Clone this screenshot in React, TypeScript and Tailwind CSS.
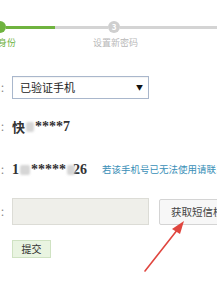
import React from "react";

const cjk = "font-['Microsoft_YaHei','Noto_Sans_CJK_SC',sans-serif]";

function Label({ text }: { text: string }) {
  return (
    <div className="flex w-[12px] shrink-0 justify-end overflow-hidden whitespace-nowrap pr-[2px] text-[10px] text-[#888]">
      {text}
    </div>
  );
}

function Mask({ w }: { w: number }) {
  return <span className="mx-[1px] inline-block h-[10px] shrink-0 rounded-[2px] bg-[#d6d6d6] blur-[1px]" style={{ width: w }} />;
}

export default function App() {
  return (
    <div className={`relative h-[301px] w-[217px] overflow-hidden bg-white ${cjk}`}>
      {/* steps */}
      <div className="flex items-center pt-[21px]">
        <div className="-ml-[6px] h-[12px] w-[12px] shrink-0 rounded-full bg-[#6fb33f]" />
        <div className="h-[3px] w-[49px] bg-[#6fb33f]" />
        <div className="h-[3px] w-[53px] bg-[#d4d4d4]" />
        <div className="flex h-[12px] w-[12px] shrink-0 items-center justify-center rounded-full bg-[#cfcfcf] text-[8px] font-bold leading-none text-white">
          3
        </div>
        <div className="h-[3px] flex-1 bg-[#d4d4d4]" />
      </div>
      <div className="mt-[4px] flex text-[9px] leading-[12px]">
        <div className="flex w-[16px] justify-end overflow-hidden whitespace-nowrap text-[#6fb33f]">验证身份</div>
        <div className="ml-[77px] text-[#b8b8b8]">设置新密码</div>
      </div>

      {/* method */}
      <div className="mt-[27px] flex items-center">
        <Label text="验证方式：" />
        <div className="flex h-[23px] w-[137px] shrink-0 items-center justify-between border border-[#a9b7cc] bg-white pl-[7px] pr-[5px] text-[11px] text-[#222] shadow-[inset_0_1px_1px_rgba(0,0,0,0.05)]">
          <span>已验证手机</span>
          <span className="text-[7px] text-[#111]">▼</span>
        </div>
      </div>

      {/* name */}
      <div className="mt-[17px] flex items-center">
        <Label text="用户名：" />
        <div className="flex items-center text-[13px] font-bold text-[#333]">
          <span>快</span>
          <Mask w={8} />
          <span className="font-['Liberation_Serif',serif] text-[14px]">****7</span>
        </div>
      </div>

      {/* phone */}
      <div className="mt-[22px] flex items-center">
        <Label text="手机号：" />
        <div className="flex shrink-0 items-center font-['Liberation_Serif',serif] text-[14px] font-bold text-[#333]">
          <span>1</span>
          <Mask w={10} />
          <span>*****</span>
          <Mask w={8} />
          <span className="-ml-[3px]">26</span>
        </div>
        <span className="ml-[15px] whitespace-nowrap text-[9.5px] text-[#3a8fb7]">若该手机号已无法使用请联系客服</span>
      </div>

      {/* code */}
      <div className="mt-[18px] flex items-center">
        <Label text="验证码：" />
        <div className="h-[27px] w-[137px] shrink-0 border border-[#dcdcd6] bg-[#efefea]" />
        <button className="ml-[10px] h-[26px] shrink-0 whitespace-nowrap rounded-[2px] border border-[#d4d4d4] bg-[#f7f7f7] px-[11px] text-[10.5px] text-[#444]">
          获取短信校验码
        </button>
      </div>

      {/* submit */}
      <div className="mt-[15px] flex">
        <div className="w-[12px] shrink-0" />
        <button className="h-[18px] w-[39px] border border-[#cfe2c2] bg-[#e9f4e1] text-[10px] leading-none text-[#333]">
          提交
        </button>
      </div>

      {/* red arrow annotation */}
      <svg className="absolute left-0 top-0" width="217" height="301" viewBox="0 0 217 301">
        <line x1="145" y1="271" x2="178" y2="229" stroke="#e0463f" strokeWidth="1.6" strokeLinecap="round" />
        <polygon points="184,221 172,229 180,234" fill="#e0463f" />
      </svg>
    </div>
  );
}
